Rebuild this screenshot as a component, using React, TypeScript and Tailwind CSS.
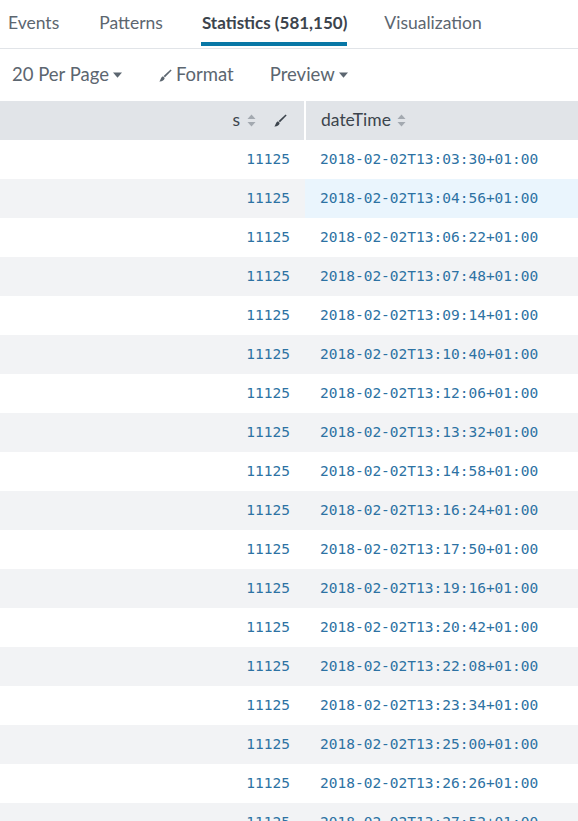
const times = [
  "13:03:30", "13:04:56", "13:06:22", "13:07:48", "13:09:14", "13:10:40",
  "13:12:06", "13:13:32", "13:14:58", "13:16:24", "13:17:50", "13:19:16",
  "13:20:42", "13:22:08", "13:23:34", "13:25:00", "13:26:26", "13:27:52",
];

function Caret() {
  return (
    <svg width="9" height="6" viewBox="0 0 9 6" className="ml-1 inline-block">
      <path d="M0 0.5h9L4.5 5.8z" fill="currentColor" />
    </svg>
  );
}

function Brush({ className = "" }: { className?: string }) {
  return (
    <svg width="13" height="13" viewBox="0 0 13 13" className={className}>
      <path d="M11.6 0.4 L12.6 1.4 L6 8.3 L4.6 6.9 Z" fill="currentColor" />
      <path d="M4 7.3 L5.7 9 C5.3 11.2 3 12.6 0.3 12.4 C1.8 11.4 1.6 8.2 4 7.3 Z" fill="currentColor" />
    </svg>
  );
}

function Sort() {
  return (
    <svg width="9" height="13" viewBox="0 0 9 13" className="inline-block">
      <path d="M4.5 0.5 L8.5 5 H0.5 Z" fill="#a3a9b0" />
      <path d="M4.5 12.5 L8.5 8 H0.5 Z" fill="#a3a9b0" />
    </svg>
  );
}

export default function App() {
  const sans = { fontFamily: "Lato, 'Open Sans', sans-serif" };
  return (
    <div className="w-[578px] h-[821px] overflow-hidden bg-white text-[#5c6670]" style={sans}>
      <nav className="flex h-[49px] border-b border-[#e1e4e8] text-[17.5px]">
        <div className="pl-2 pr-[40px] flex items-center pb-[2px]">Events</div>
        <div className="pr-[39px] flex items-center pb-[2px]">Patterns</div>
        <div className="relative pr-[37px] flex items-center">
          <span className="relative font-bold text-[#3c444d] h-full flex items-center pb-[2px] text-[17px]">
            Statistics (581,150)
            <span className="absolute -left-px right-0 bottom-[2px] h-[4px] bg-[#0877a6]" />
          </span>
        </div>
        <div className="flex items-center pb-[2px]">Visualization</div>
      </nav>

      <div className="flex items-center h-[52px] text-[18.5px] text-[#5c6670]">
        <div className="pl-3 flex items-center">
          20 Per Page
          <Caret />
        </div>
        <div className="ml-[37px] flex items-center">
          <Brush className="mr-1" />
          Format
        </div>
        <div className="ml-[36px] flex items-center">
          Preview
          <Caret />
        </div>
      </div>

      <table className="w-full border-collapse table-fixed">
        <thead>
          <tr className="h-[39px] bg-[#e1e4e8] text-[17.5px] text-[#3c444d]">
            <th className="w-[305px] font-normal text-right pr-[17px] border-r-2 border-white">
              <span className="inline-flex items-center gap-[7px]">
                s <Sort />
                <Brush className="ml-[11px] text-[#3c444d]" />
              </span>
            </th>
            <th className="font-normal text-left pl-[15px]">
              <span className="inline-flex items-center gap-1.5">
                dateTime <Sort />
              </span>
            </th>
          </tr>
        </thead>
        <tbody
          className="text-[14.5px] text-[#2d72a3]"
          style={{ fontFamily: "'DejaVu Sans Mono', monospace" }}
        >
          {times.map((t, i) => (
            <tr key={t} className={`h-[39px] ${i % 2 === 1 ? "bg-[#f2f3f5]" : "bg-white"}`}>
              <td className="text-right pr-[15px]">11125</td>
              <td className={`pl-[15px] ${i === 1 ? "bg-[#eaf5fd]" : ""}`}>
                2018-02-02T{t}+01:00
              </td>
            </tr>
          ))}
        </tbody>
      </table>
    </div>
  );
}
